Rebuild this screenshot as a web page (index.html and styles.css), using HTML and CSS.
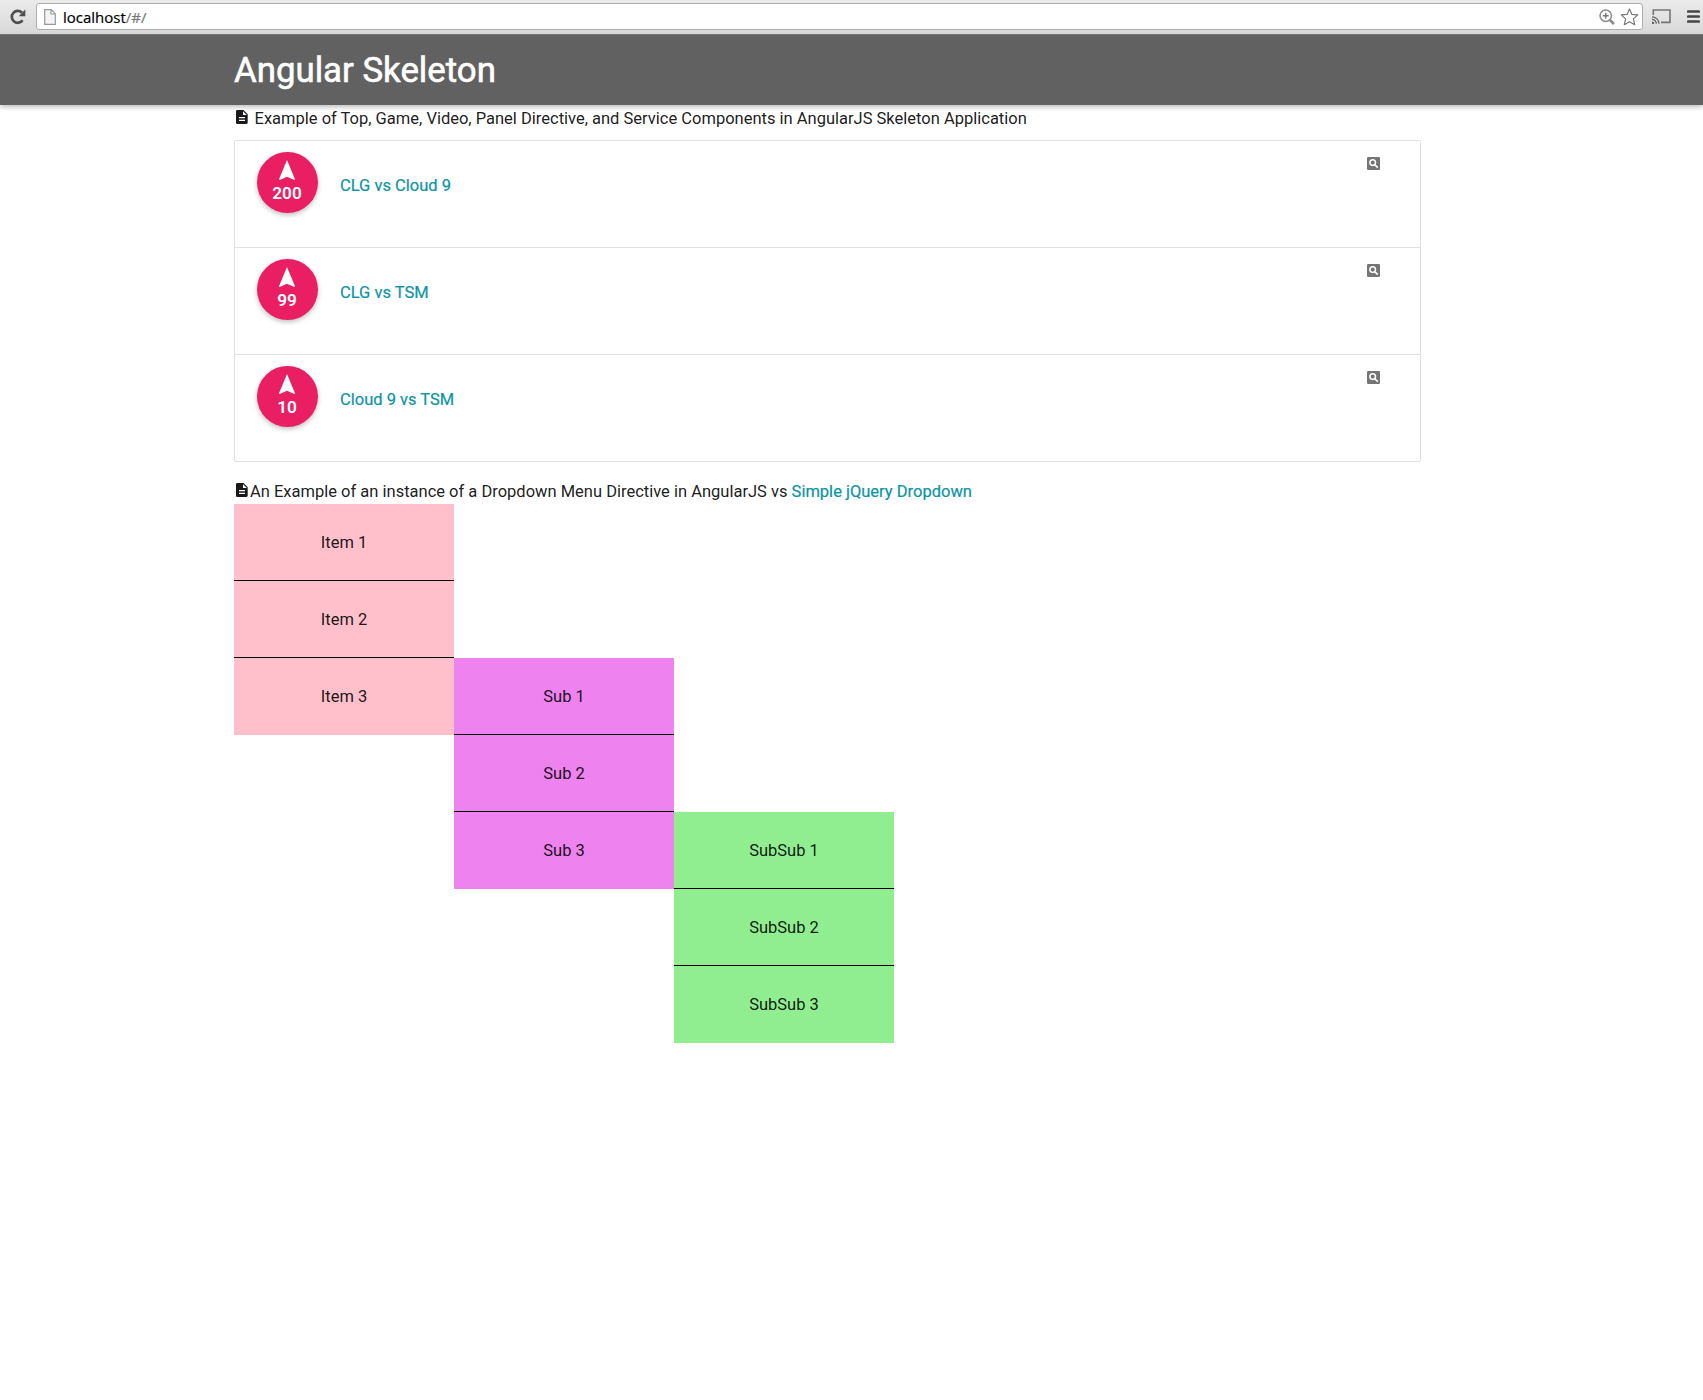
FILE: index.html
```html
<!DOCTYPE html>
<html lang="en">
<head>
<meta charset="utf-8">
<title>Angular Skeleton</title>
<link rel="stylesheet" href="styles.css">
</head>
<body>
<svg class="defs" aria-hidden="true">
  <symbol id="doc" viewBox="0 0 12 14"><path fill="currentColor" fill-rule="evenodd" d="M1.3 0H7.5L11.7 4.2V12.6Q11.7 14 10.4 14H1.3Q0 14 0 12.7V1.3Q0 0 1.3 0ZM7 1.2V5H10.8ZM3 7V8.2H9V7ZM3 9.8V11H9V9.8Z"/></symbol>
  <symbol id="up" viewBox="0 0 16 20"><path fill="currentColor" d="M8 0L16 19.3L15.3 20L8 16.8L.7 20L0 19.3Z"/></symbol>
  <symbol id="find" viewBox="0 0 13 13"><rect width="13" height="13" rx="1.2" fill="#757575"/><circle cx="5.7" cy="5.6" r="2.8" fill="none" stroke="#fff" stroke-width="1.5"/><path d="M7.6 7.5L10.8 10.7" stroke="#fff" stroke-width="1.7"/></symbol>
</svg>
<div class="browser">
  <svg class="reload" width="16" height="16" viewBox="0 0 16 16"><path d="M12.6 11.2A5.9 5.9 0 1 1 12 3.8" fill="none" stroke="#4d4f4f" stroke-width="2.7"/><path d="M15.3 .6V7.2H8.7Z" fill="#4d4f4f"/></svg>
  <div class="address">
    <svg class="page" width="12" height="16" viewBox="0 0 12 16"><path d="M.7.7H7.3L11.3 4.7V15.3H.7ZM7 .7V5H11.3" fill="#f4f4f4" stroke="#999" stroke-width="1.2"/></svg>
    <span class="url">localhost<span>/#/</span></span>
    <svg class="zoomed" width="16" height="16" viewBox="0 0 16 16"><circle cx="6.7" cy="6.7" r="5.7" fill="none" stroke="#8a8a8a" stroke-width="1.5"/><path d="M3.7 6.7H9.7M6.7 3.7V9.7" stroke="#777" stroke-width="1.4"/><path d="M10.8 10.8L15 15" stroke="#8a8a8a" stroke-width="2.6"/></svg>
    <svg width="19" height="18" viewBox="0 0 19 18"><path d="M9.5 1L11.9 6.4L17.8 6.9L13.4 10.9L14.7 16.7L9.5 13.7L4.3 16.7L5.6 10.9L1.2 6.9L7.1 6.4Z" fill="#fff" stroke="#777" stroke-width="1.2" stroke-linejoin="round"/></svg>
  </div>
  <svg class="cast" width="19" height="15" viewBox="0 0 19 15"><path d="M1.3 6V1H18V13.4H9" fill="none" stroke="#757575" stroke-width="1.6"/><path d="M0 7.8A7 7 0 0 1 7 14.8M0 10.4A4.4 4.4 0 0 1 4.4 14.8" fill="none" stroke="#666" stroke-width="1.3"/><path d="M0 12.6A2.2 2.2 0 0 1 2.2 15H0Z" fill="#666"/></svg>
  <svg class="menu" width="13" height="13" viewBox="0 0 13 13"><path d="M1.3 1.5H11.7M1.3 6.5H11.7M1.3 11.5H11.7" stroke="#444646" stroke-width="2.7" stroke-linecap="round"/></svg>
</div>
<header class="bar"><h1>Angular Skeleton</h1></header>
<main class="container">
  <p class="intro"><svg class="doc"><use href="#doc"/></svg>Example of Top, Game, Video, Panel Directive, and Service Components in AngularJS Skeleton Application</p>
  <ul class="games">
    <li><div class="vote"><svg><use href="#up"/></svg>200</div><a>CLG vs Cloud 9</a><svg class="find"><use href="#find"/></svg></li>
    <li><div class="vote"><svg><use href="#up"/></svg>99</div><a>CLG vs TSM</a><svg class="find"><use href="#find"/></svg></li>
    <li><div class="vote"><svg><use href="#up"/></svg>10</div><a>Cloud 9 vs TSM</a><svg class="find"><use href="#find"/></svg></li>
  </ul>
  <p class="intro second"><svg class="doc"><use href="#doc"/></svg><span>An Example of an instance of a Dropdown Menu Directive in AngularJS vs <a>Simple jQuery Dropdown</a></span></p>
  <div class="dropdown">
    <ul class="level pink"><li>Item 1</li><li>Item 2</li><li>Item 3</li></ul>
    <ul class="level violet"><li>Sub 1</li><li>Sub 2</li><li>Sub 3</li></ul>
    <ul class="level green"><li>SubSub 1</li><li>SubSub 2</li><li>SubSub 3</li></ul>
  </div>
</main>
</body>
</html>
```
FILE: styles.css
```css
* { box-sizing: border-box; margin: 0; padding: 0; }
body { background: #fff; color: rgba(0,0,0,.9); font: 16.5px/25px Roboto, sans-serif; }
ul { list-style: none; }
svg { display: block; flex: none; }
a { color: #0d93a5; -webkit-text-stroke: .2px #0d93a5; }
.defs { width: 0; height: 0; position: absolute; }
.browser { display: flex; align-items: center; height: 35px; padding: 0 0 1px 10px; background: linear-gradient(#ebebeb, #d9d9d9); border-bottom: 1px solid #7c7c7c; }
.address { flex: none; display: flex; align-items: center; width: 1607px; height: 27px; margin-left: 10px; padding: 0 3px 0 7px; background: #fff; border: 1px solid #acaeac; border-radius: 3px; }
.url { flex: 1; margin-left: 7px; color: #000; font: 15px "Open Sans", sans-serif; -webkit-text-stroke: .2px; }
.url span { color: #777; }
.zoomed { margin-right: 5px; }
.cast { margin-left: 9px; }
.menu { margin-left: 16px; }
.bar { height: 70px; padding-left: 234px; background: #616161; box-shadow: 0 2px 5px rgba(0,0,0,.26); }
h1 { color: #fff; font-size: 34.8px; line-height: 71px; font-weight: 400; -webkit-text-stroke: .6px #fff; white-space: nowrap; }
.container { width: 1187px; margin-left: 234px; }
.intro { display: flex; height: 35px; padding-top: 1px; white-space: nowrap; }
.doc { width: 12px; height: 14px; margin: 4px 6.5px 0 2px; }
.games { border: 1px solid #e0e0e0; border-radius: 2px; }
.games li { display: flex; height: 107px; padding: 11px 40px 0 22px; border-bottom: 1px solid #e0e0e0; }
.games li:last-child { height: 106px; border-bottom: 0; }
.games a { flex: 1; margin: 21px 0 0 22px; }
.vote { width: 61px; height: 61px; padding: 8px 1px 0 0; border-radius: 50%; background: #e91e63; color: #fff; text-align: center; font-size: 17.2px; font-weight: 600; line-height: 27px; box-shadow: 0 2px 5px rgba(0,0,0,.26); }
.vote svg { width: 16px; height: 20px; margin: 0 auto; }
.find { width: 13px; height: 13px; margin-top: 5px; }
.second { height: 42px; padding-top: 17px; }
.second .doc { margin-right: 2px; }
.dropdown { display: grid; grid-template-columns: repeat(3, 220px); grid-template-rows: repeat(7, 77px); }
.level { text-align: center; line-height: 78px; }
.level li { height: 77px; }
.level li + li { box-shadow: 0 -1px #000; }
.pink { grid-area: 1 / 1 / 4 / 2; background: pink; }
.violet { grid-area: 3 / 2 / 6 / 3; background: violet; }
.green { grid-area: 5 / 3 / 8 / 4; background: lightgreen; }
```
